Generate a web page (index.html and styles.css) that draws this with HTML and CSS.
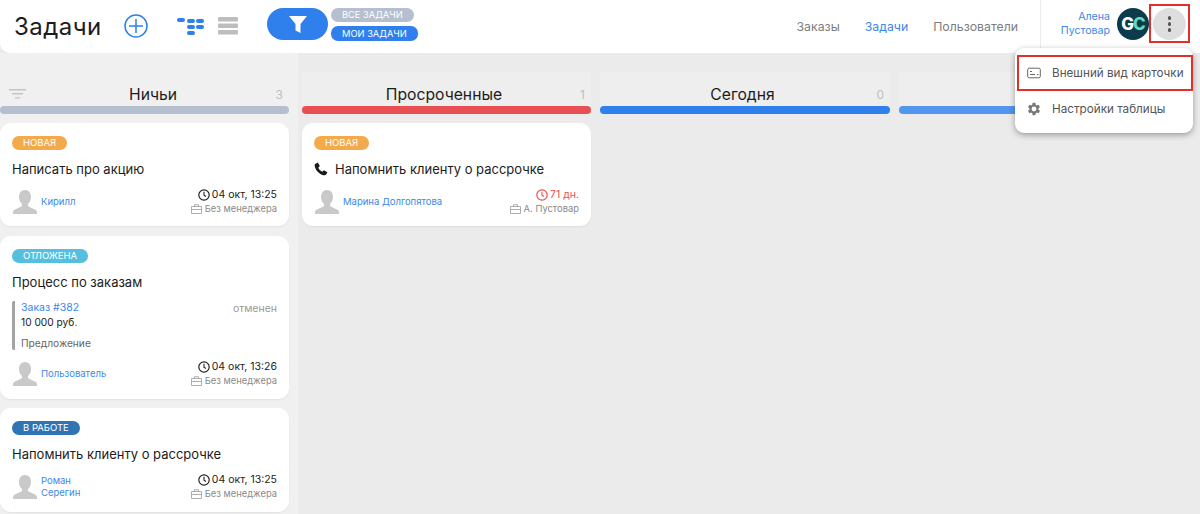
FILE: index.html
```html
<!DOCTYPE html>
<html lang="ru">
<head>
<meta charset="utf-8">
<title>Задачи</title>
<link rel="stylesheet" href="styles.css">
</head>
<body>
<div class="page">
  <header class="topbar">
    <h1 class="title">Задачи</h1>
    <svg class="add" width="24" height="24" viewBox="0 0 24 24"><circle cx="12" cy="12" r="11" fill="none" stroke="#2f7fec" stroke-width="1.500"/><path d="M12 5v14M5 12h14" stroke="#2f7fec" stroke-width="1.500"/></svg>
    <svg class="view" width="27" height="17" viewBox="0 0 27 17"><g fill="#2f7fec"><rect x="0" y="0" width="8" height="4" rx="2"/><rect x="10" y="1" width="8" height="4" rx="2"/><rect x="19" y="1" width="8" height="4" rx="2"/><rect x="10" y="7" width="8" height="4" rx="2"/><rect x="19" y="7" width="8" height="4" rx="2"/><rect x="10" y="13" width="8" height="4" rx="2"/></g></svg>
    <svg class="view2" width="20" height="18" viewBox="0 0 20 18"><g fill="#bdbdbd"><rect y="0" width="20" height="4.400" rx="1"/><rect y="6.500" width="20" height="4.400" rx="1"/><rect y="13" width="20" height="4.400" rx="1"/></g></svg>
    <div class="filter"><svg width="18" height="17" viewBox="0 0 18 17"><path d="M0 0h18l-6.500 8v9l-5-2.500V8z" fill="#fff"/></svg></div>
    <div class="filter-tags">
      <span class="ftag grey">ВСЕ ЗАДАЧИ</span>
      <span class="ftag blue">МОИ ЗАДАЧИ</span>
    </div>
    <nav class="nav">
      <a class="nav-link">Заказы</a>
      <a class="nav-link active">Задачи</a>
      <a class="nav-link">Пользователи</a>
    </nav>
    <div class="user">
      <div class="user-name">Алена<br>Пустовар</div>
      <div class="avatar"><span class="g">G</span><span class="c">C</span></div>
      <div class="more"><i></i><i></i><i></i></div>
    </div>
  </header>

  <main class="board">
    <section class="col first">
      <div class="col-head">
        <svg class="sort" width="17" height="10" viewBox="0 0 17 10"><path d="M0 .7h17M3 4.800h11M6 8.900h5" stroke="#c4c4c4" stroke-width="1.400"/></svg>
        <span class="col-title">Ничьи</span><span class="count">3</span>
      </div>
      <div class="bar b-grey"></div>
      <article class="card">
        <span class="tag orange">НОВАЯ</span>
        <h2 class="card-title">Написать про акцию</h2>
        <div class="card-foot">
          <svg class="person" width="24" height="24" viewBox="0 0 24 24"><path d="M12 0c4 0 6 3 6 7 0 3-1 5-3 7v2c2 2 9 3 9 6v2H0v-2c0-3 7-4 9-6v-2C7 12 6 10 6 7c0-4 2-7 6-7z" fill="#c9c9c9"/></svg>
          <a class="who">Кирилл</a>
          <div class="meta">
            <div class="when"><svg class="clock" width="12" height="12" viewBox="0 0 12 12"><circle cx="6" cy="6" r="5.200" fill="none" stroke="currentColor" stroke-width="1.200"/><path d="M6 2.800V6.300l2 1.200" fill="none" stroke="currentColor" stroke-width="1.100"/></svg>04 окт, 13:25</div>
            <div class="mgr"><svg class="case" width="11" height="10" viewBox="0 0 11 10"><path d="M.5 2.500h10v7H.5zM3.500 2.500V.7h4v1.800M.5 5.500h10" fill="none" stroke="#9a9a9a" stroke-width=".8"/></svg>Без менеджера</div>
          </div>
        </div>
      </article>
      <article class="card tall">
        <span class="tag cyan">ОТЛОЖЕНА</span>
        <h2 class="card-title">Процесс по заказам</h2>
        <div class="order">
          <div class="order-info">
            <a class="order-link">Заказ #382</a>
            <div class="order-sum">10 000 руб.</div>
            <div class="order-stage">Предложение</div>
          </div>
          <span class="order-state">отменен</span>
        </div>
        <div class="card-foot">
          <svg class="person" width="24" height="24" viewBox="0 0 24 24"><path d="M12 0c4 0 6 3 6 7 0 3-1 5-3 7v2c2 2 9 3 9 6v2H0v-2c0-3 7-4 9-6v-2C7 12 6 10 6 7c0-4 2-7 6-7z" fill="#c9c9c9"/></svg>
          <a class="who">Пользователь</a>
          <div class="meta">
            <div class="when"><svg class="clock" width="12" height="12" viewBox="0 0 12 12"><circle cx="6" cy="6" r="5.200" fill="none" stroke="currentColor" stroke-width="1.200"/><path d="M6 2.800V6.300l2 1.200" fill="none" stroke="currentColor" stroke-width="1.100"/></svg>04 окт, 13:26</div>
            <div class="mgr"><svg class="case" width="11" height="10" viewBox="0 0 11 10"><path d="M.5 2.500h10v7H.5zM3.500 2.500V.7h4v1.800M.5 5.500h10" fill="none" stroke="#9a9a9a" stroke-width=".8"/></svg>Без менеджера</div>
          </div>
        </div>
      </article>
      <article class="card last">
        <span class="tag navy">В РАБОТЕ</span>
        <h2 class="card-title">Напомнить клиенту о рассрочке</h2>
        <div class="card-foot">
          <svg class="person" width="24" height="24" viewBox="0 0 24 24"><path d="M12 0c4 0 6 3 6 7 0 3-1 5-3 7v2c2 2 9 3 9 6v2H0v-2c0-3 7-4 9-6v-2C7 12 6 10 6 7c0-4 2-7 6-7z" fill="#c9c9c9"/></svg>
          <a class="who">Роман<br>Серегин</a>
          <div class="meta">
            <div class="when"><svg class="clock" width="12" height="12" viewBox="0 0 12 12"><circle cx="6" cy="6" r="5.200" fill="none" stroke="currentColor" stroke-width="1.200"/><path d="M6 2.800V6.300l2 1.200" fill="none" stroke="currentColor" stroke-width="1.100"/></svg>04 окт, 13:25</div>
            <div class="mgr"><svg class="case" width="11" height="10" viewBox="0 0 11 10"><path d="M.5 2.500h10v7H.5zM3.500 2.500V.7h4v1.800M.5 5.500h10" fill="none" stroke="#9a9a9a" stroke-width=".8"/></svg>Без менеджера</div>
          </div>
        </div>
      </article>
    </section>

    <section class="col">
      <div class="col-head"><span class="col-title">Просроченные</span><span class="count">1</span></div>
      <div class="bar b-red"></div>
      <article class="card">
        <span class="tag orange">НОВАЯ</span>
        <h2 class="card-title"><svg class="phone" width="14" height="14" viewBox="0 0 24 24"><path d="M6.600 1 2 3.500C1 4 1 6 1.500 8c2 7 7.500 12.500 14.500 14.500 2 .5 4 .5 4.500-.5L23 17.400l-6-3.400-2.700 2.700c-3.200-1.500-5.500-3.800-7-7L10 7z" fill="#1a1a1a"/></svg>Напомнить клиенту о рассрочке</h2>
        <div class="card-foot">
          <svg class="person" width="24" height="24" viewBox="0 0 24 24"><path d="M12 0c4 0 6 3 6 7 0 3-1 5-3 7v2c2 2 9 3 9 6v2H0v-2c0-3 7-4 9-6v-2C7 12 6 10 6 7c0-4 2-7 6-7z" fill="#c9c9c9"/></svg>
          <a class="who">Марина Долгопятова</a>
          <div class="meta">
            <div class="when late"><svg class="clock" width="12" height="12" viewBox="0 0 12 12"><circle cx="6" cy="6" r="5.200" fill="none" stroke="currentColor" stroke-width="1.200"/><path d="M6 2.800V6.300l2 1.200" fill="none" stroke="currentColor" stroke-width="1.100"/></svg>71 дн.</div>
            <div class="mgr"><svg class="case" width="11" height="10" viewBox="0 0 11 10"><path d="M.5 2.500h10v7H.5zM3.500 2.500V.7h4v1.800M.5 5.500h10" fill="none" stroke="#9a9a9a" stroke-width=".8"/></svg>А. Пустовар</div>
          </div>
        </div>
      </article>
    </section>

    <section class="col">
      <div class="col-head"><span class="col-title">Сегодня</span><span class="count">0</span></div>
      <div class="bar b-blue"></div>
    </section>

    <section class="col">
      <div class="col-head"><span class="col-title">Завтра</span><span class="count">0</span></div>
      <div class="bar b-light"></div>
    </section>
  </main>

  <div class="menu">
    <div class="menu-item"><svg width="14" height="12" viewBox="0 0 14 12"><rect x=".7" y="1.200" width="12.600" height="9.600" rx="1.500" fill="none" stroke="#666" stroke-width="1"/><path d="M3 4.500h2M3 7.500h5M10 7.500h1.500" stroke="#666" stroke-width="1"/></svg>Внешний вид карточки</div>
    <div class="menu-item"><svg width="14" height="14" viewBox="3 2 20 20"><path fill="#777" fill-rule="evenodd" d="M19.400 13a7.500 7.500 0 0 0 0-2l2.100-1.600-2-3.500-2.500 1a7.500 7.500 0 0 0-1.700-1L15 3.200h-4l-.4 2.700a7.500 7.500 0 0 0-1.700 1l-2.500-1-2 3.500L6.500 11a7.500 7.500 0 0 0 0 2l-2.100 1.600 2 3.500 2.500-1c.5.400 1.100.7 1.700 1l.4 2.700h4l.4-2.700c.6-.3 1.200-.6 1.700-1l2.500 1 2-3.500zM13 15.500a3.500 3.500 0 1 1 0-7 3.500 3.500 0 0 1 0 7z"/></svg>Настройки таблицы</div>
  </div>
  <div class="mark mark-more"></div>
  <div class="mark mark-item"></div>
</div>
</body>
</html>
```
FILE: styles.css
```css
* { box-sizing: border-box; }
html, body { margin: 0; padding: 0; height: 100%; }
body { font-family: Inter, "Noto Sans", sans-serif; color: #1c1c1c; background: #ebebeb; overflow: hidden; }
.page { position: relative; width: 1200px; height: 514px; overflow: hidden; }

.topbar { height: 53px; background: #fff; border-bottom-left-radius: 10px; display: flex; align-items: center; padding-left: 14px; position: relative; z-index: 1; }
.title { margin: 0; font-size: 24px; font-weight: 400; line-height: 53px; width: 110px; letter-spacing: .45px; }
.add { margin-right: 29px; margin-bottom: 1px; }
.view { margin-right: 14px; margin-bottom: 1px; }
.view2 { margin-right: 29px; margin-bottom: 1px; }
.filter { width: 61px; height: 32px; border-radius: 16px; background: #2f7fec; display: flex; align-items: center; justify-content: center; margin-right: 3px; margin-bottom: 5px; }
.filter-tags { display: flex; flex-direction: column; gap: 4px; align-items: flex-start; margin-bottom: 5px; }
.ftag { height: 14px; line-height: 14px; border-radius: 7px; font-size: 9.300px; color: #fff; padding: 0 11px; white-space: nowrap; }
.ftag.grey { background: #b5bfcf; }
.ftag.blue { background: #2f7fec; height: 15px; line-height: 15px; }

.nav { margin-left: auto; display: flex; gap: 25px; font-size: 12.300px; margin-right: 22px; margin-bottom: 1px; }
.nav-link { color: #7d7d7d; }
.nav-link.active { color: #3d87ea; }

.user { width: 160px; height: 53px; border-left: 1px solid #ececec; display: flex; align-items: center; justify-content: flex-end; padding: 0 14px 5px 0; }
.user-name { font-size: 10.600px; line-height: 14px; color: #3d87ea; text-align: right; margin-right: 7px; }
.avatar { width: 32px; height: 32px; border-radius: 50%; background: #0d3a4c; display: flex; align-items: center; justify-content: center; font-size: 17px; font-weight: 800; letter-spacing: -1px; margin-right: 4px; }
.avatar .g { color: #fff; }
.avatar .c { color: #5fdcc0; }
.more { width: 33px; height: 32px; border-radius: 50%; background: #dedede; display: flex; flex-direction: column; align-items: center; justify-content: center; gap: 2.500px; }
.more i { width: 3.500px; height: 3.500px; border-radius: 50%; background: #555; }

.board { display: flex; height: 461px; align-items: stretch; }
.col { width: 299px; flex: none; padding: 19px 5px 0 4px; position: relative; }
.col.first + .col { width: 298px; }
.col.first { width: 298px; background: #f0f0f0; padding: 19px 9px 0 0; }
.col-head { height: 34px; background: #eeeeee; display: flex; align-items: center; justify-content: center; position: relative; padding-right: 5px; }
.col.first .col-head { background: transparent; padding: 0 0 0 17px; }
.col-title { font-size: 15.700px; line-height: 20px; margin-top: 12px; }
.count { position: absolute; right: 6px; top: 15px; font-size: 12px; color: #bfbfbf; }
.sort { position: absolute; left: 9px; top: 17px; }
.bar { height: 8px; border-radius: 4px; }
.b-grey { background: #b5bfcf; }
.b-red { background: #e84f52; }
.b-blue { background: #2f7fec; }
.b-light { background: #5296ee; }

.card { background: #fff; border-radius: 11px; box-shadow: 0 1px 2px rgba(0,0,0,.06); padding: 13px 12px 0; margin-top: 9px; height: 103px; }
.card.tall { height: 163px; margin-top: 10px; }
.card.last { height: 104px; }
.tag { display: block; width: fit-content; height: 14px; line-height: 14px; border-radius: 7px; color: #fff; font-size: 9.500px; padding: 0 11px; }
.orange { background: #f2aa4c; }
.cyan { background: #56bfdf; }
.navy { background: #2f74b5; }
.card-title { margin: 9px 0 0; font-size: 13px; font-weight: 400; line-height: 20px; height: 20px; display: flex; align-items: center; }
.phone { margin-right: 7px; }
.card-foot { display: flex; align-items: center; margin-top: 8px; height: 30px; }
.person { margin: 0 4px 0 1px; flex: none; }
.who { font-size: 9.500px; line-height: 12.500px; color: #3d87ea; }
.meta { margin-left: auto; text-align: right; }
.when { font-size: 10.500px; line-height: 14px; color: #222; display: flex; align-items: center; justify-content: flex-end; }
.when.late { color: #e84f52; }
.clock { margin-right: 2px; }
.mgr { font-size: 9.400px; line-height: 14px; color: #8a8a8a; display: flex; align-items: center; justify-content: flex-end; }
.case { margin-right: 3px; }

.order { display: flex; border-left: 3px solid #a3a3a3; border-radius: 2px; padding-left: 6px; height: 49px; margin-top: 9px; justify-content: space-between; }
.order-link { display: block; font-size: 10.500px; line-height: 14px; color: #3d87ea; }
.order-sum { font-size: 10.200px; line-height: 14px; color: #222; }
.order-stage { font-size: 10.200px; line-height: 14px; color: #666; margin-top: 7px; }
.order-state { font-size: 10.500px; line-height: 14px; color: #999; padding-top: 1px; }
.order + .card-foot { margin-top: 9px; }

.menu { position: absolute; left: 1015px; top: 48px; width: 178px; height: 85px; background: #fff; border-radius: 9px; box-shadow: 0 2px 6px rgba(0,0,0,.35); z-index: 3; padding-top: 7px; }
.menu-item { height: 36px; display: flex; align-items: center; gap: 11px; padding-left: 12px; font-size: 11.700px; color: #555; white-space: nowrap; }
.menu-item svg { flex: none; }

.mark { position: absolute; border: 2px solid #e0302a; z-index: 4; }
.mark-more { left: 1149px; top: 4px; width: 41px; height: 39px; }
.mark-item { left: 1017px; top: 55px; width: 176px; height: 36px; }
```
